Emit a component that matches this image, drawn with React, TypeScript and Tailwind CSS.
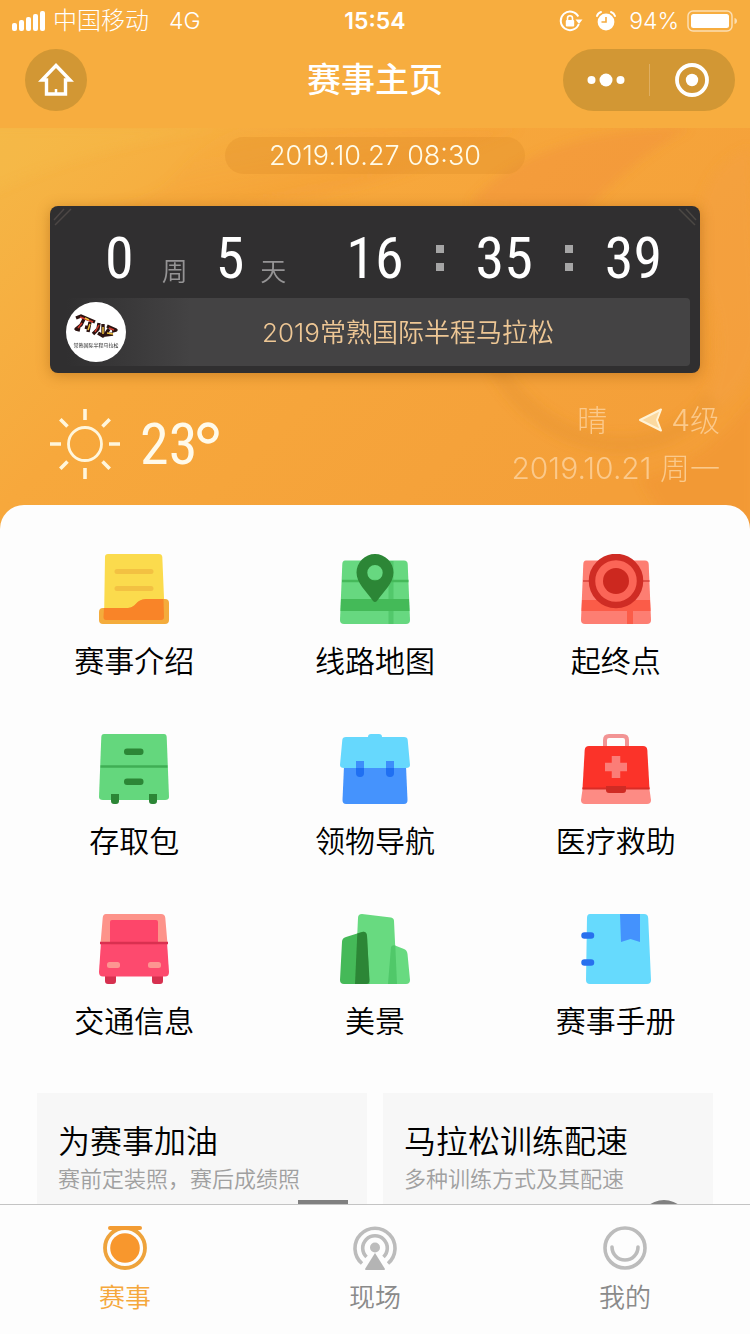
import type { ReactNode } from "react";

const digits = "font-['Roboto_Condensed','Roboto',sans-serif] text-[58px] leading-[60px] font-normal";

function HeroArt() {
  return (
    <svg className="absolute inset-0 h-full w-full" viewBox="0 0 750 400" preserveAspectRatio="none" aria-hidden="true">
      <defs>
        <linearGradient id="heroBase" x1="0" y1="0" x2="1" y2="0.55">
          <stop offset="0" stopColor="#f5b746" />
          <stop offset="0.4" stopColor="#f7a83c" />
          <stop offset="1" stopColor="#f49f39" />
        </linearGradient>
        <linearGradient id="heroFlame" x1="0" y1="0" x2="1" y2="1">
          <stop offset="0" stopColor="#f9a338" stopOpacity="0" />
          <stop offset="1" stopColor="#f0922f" stopOpacity="0.5" />
        </linearGradient>
        <filter id="soft">
          <feGaussianBlur stdDeviation="5" />
        </filter>
      </defs>
      <rect width="750" height="400" fill="url(#heroBase)" />
      <g filter="url(#soft)">
        <path d="M-20 70C60 30 130 15 220 0H-20Z" fill="#f7bd48" opacity="0.35" />
        <path d="M90 80C200 70 160 30 240 0H520C420 40 330 90 90 80Z" fill="url(#heroFlame)" />
        <path d="M470 75C520 20 600 0 690 0C640 25 610 60 580 85Z" fill="#f08c38" opacity="0.35" />
        <path d="M750 20C690 40 690 120 710 170C725 210 720 270 680 300C720 290 760 250 760 200Z" fill="#f4a040" opacity="0.6" />
        <path d="M495 235C535 315 650 350 712 270" fill="none" stroke="#e28f30" strokeWidth="18" opacity="0.3" />
        <path d="M640 350C690 335 725 310 755 265V400H670Z" fill="#ef9030" opacity="0.4" />
      </g>
    </svg>
  );
}

function StatusBar() {
  return (
    <div className="flex h-10 items-center px-3 pt-[2px] text-white">
      <div className="flex flex-1 items-center gap-2">
        <svg width="33" height="22" viewBox="0 0 33 22" fill="currentColor" aria-hidden="true">
          <rect x="0" y="13" width="5" height="8" rx="2" />
          <rect x="7" y="10" width="5" height="11" rx="2" />
          <rect x="14" y="7" width="5" height="14" rx="2" />
          <rect x="21" y="4" width="5" height="17" rx="2" />
          <rect x="28" y="1" width="5" height="20" rx="2" />
        </svg>
        <span className="text-2xl font-light">中国移动</span>
        <span className="ml-3 text-[23px] font-light">4G</span>
      </div>
      <time className="text-[23px] font-semibold">15:54</time>
      <div className="flex flex-1 items-center justify-end">
        <svg className="mr-3" width="24" height="22" viewBox="0 0 24 22" fill="none" stroke="currentColor" aria-hidden="true">
          <path d="M19.3 6.5A9.3 9.3 0 1 0 19.8 14" strokeWidth="2" />
          <path d="M16.5 9.5H23.5L20 14Z" fill="currentColor" stroke="none" />
          <rect x="6.8" y="10" width="8.4" height="6.4" rx="1" fill="currentColor" stroke="none" />
          <path d="M8.5 10V8.2A2.5 2.5 0 0 1 13.5 8.2V10" strokeWidth="1.6" />
        </svg>
        <svg className="mr-3" width="22" height="22" viewBox="0 0 22 22" fill="none" aria-hidden="true">
          <circle cx="11" cy="12" r="8.4" fill="white" />
          <path d="M2 6A6 6 0 0 1 6 2M20 6A6 6 0 0 0 16 2" stroke="white" strokeWidth="2" strokeLinecap="round" />
          <path d="M11 7V12H6.5" stroke="#f5ab3e" strokeWidth="1.6" />
        </svg>
        <span className="mr-2 text-[23px] font-light">94%</span>
        <svg width="51" height="22" viewBox="0 0 51 22" fill="none" aria-hidden="true">
          <rect x="1" y="1" width="44" height="20" rx="5" stroke="white" strokeOpacity="0.6" strokeWidth="1.5" />
          <rect x="4" y="4" width="38" height="14" rx="2.5" fill="white" />
          <path d="M47.5 8V14C49.5 13.5 50 12 50 11S49.5 8.500 47.500 8Z" fill="white" fillOpacity="0.6" />
        </svg>
      </div>
    </div>
  );
}

function NavBar() {
  return (
    <div className="grid h-20 grid-cols-[1fr_auto_1fr] items-center px-[15px]">
      <button aria-label="返回首页" className="ml-[10px] flex size-[62px] items-center justify-center rounded-full bg-[#d29734] text-white">
        <svg width="36" height="34" viewBox="0 0 36 34" fill="none" stroke="currentColor" strokeWidth="3.4" aria-hidden="true">
          <path d="M18 2.500L32 17H27.500V31H8.500V17H4Z" strokeLinejoin="miter" />
          <path d="M18 31V26" strokeWidth="2.500" />
        </svg>
      </button>
      <h1 className="text-[34px] leading-10 font-medium text-white">赛事主页</h1>
      <div className="flex h-[62px] w-[172px] items-center justify-self-end rounded-full bg-[#d29734] text-white">
        <button aria-label="更多" className="flex flex-1 justify-center">
          <svg width="38" height="14" viewBox="0 0 38 14" fill="currentColor" aria-hidden="true">
            <circle cx="4.500" cy="7" r="4" />
            <circle cx="19" cy="7" r="6.500" />
            <circle cx="33.500" cy="7" r="4" />
          </svg>
        </button>
        <span className="h-8 w-px bg-[#dfae60]" />
        <button aria-label="关闭" className="flex flex-1 justify-center">
          <svg width="34" height="34" viewBox="0 0 34 34" aria-hidden="true">
            <circle cx="17" cy="17" r="15" fill="none" stroke="currentColor" strokeWidth="3.800" />
            <circle cx="17" cy="17" r="6.200" fill="currentColor" />
          </svg>
        </button>
      </div>
    </div>
  );
}

function Colon() {
  return (
    <span className="flex flex-col gap-[10px]" aria-hidden="true">
      <i className="size-2 bg-[#a5a5a5]" />
      <i className="size-2 bg-[#a5a5a5]" />
    </span>
  );
}

function EventLogo() {
  return (
    <svg className="relative size-[60px] shrink-0 rounded-full bg-white" viewBox="0 0 60 60" aria-hidden="true">
      <g fill="none" stroke="#2b1210" strokeWidth="3.400" strokeLinejoin="round">
        <path d="M10 16L15 14L29 20" />
        <path d="M18 17L15 23L10 27L14 28" />
        <path d="M24 20L22 30M19 25L23 26" />
        <path d="M33 21L32 27L27 32" />
        <path d="M37 22V34L32 31" />
        <path d="M41 24L50 28L46 29M43 27L39 33L47 32" />
      </g>
      <g stroke="#d0382b" strokeWidth="1.500" fill="none">
        <path d="M14 15L27 20M16 21L12 26M33 23L29 30M43 26L48 28" />
      </g>
      <g stroke="#efc13c" strokeWidth="1.500" fill="none">
        <path d="M24 22L22 28M37 25V32M41 31L47 32M19 16L23 18" />
      </g>
      <text x="30" y="45" textAnchor="middle" fontSize="5" fill="#222222">常熟国际半程马拉松</text>
    </svg>
  );
}

function Countdown() {
  return (
    <section className="relative mx-[50px] mt-8 overflow-hidden rounded-lg bg-[#302f30] shadow-[0_2px_14px_rgba(150,85,10,0.45)]">
      <svg className="absolute top-0 left-0" width="26" height="26" viewBox="0 0 26 26" stroke="#4c4645" strokeWidth="1.500" aria-hidden="true">
        <path d="M4 14L14 3M5 19L21 3" />
      </svg>
      <svg className="absolute top-0 right-0" width="26" height="26" viewBox="0 0 26 26" stroke="#4c4844" strokeWidth="1.500" aria-hidden="true">
        <path d="M22 14L12 3M21 19L5 3" />
      </svg>
      <div className="flex h-[92px] items-center gap-8 pt-3 pl-[55px] text-white">
        <div className="mr-7 flex items-center gap-7">
          <span className={digits}>0</span>
          <span className="pt-7 text-[26px] leading-8 font-[350] text-[#959495]">周</span>
          <span className="flex items-center gap-4">
            <span className={digits}>5</span>
            <span className="pt-7 text-[26px] leading-8 font-[350] text-[#959495]">天</span>
          </span>
        </div>
        <span className={digits}>16</span>
        <Colon />
        <span className={digits}>35</span>
        <Colon />
        <span className={digits}>39</span>
      </div>
      <div className="mr-[10px] mb-[7px] ml-4 flex h-[68px] items-center rounded-sm bg-linear-to-r from-[#302f30] to-[#444344] to-20%">
        <EventLogo />
        <p className="flex-1 text-center text-[26px] font-[350] text-[#eec795]">2019常熟国际半程马拉松</p>
      </div>
    </section>
  );
}

function Weather() {
  return (
    <section className="flex items-center justify-between pt-[23px] pr-[30px] pb-[13px] pl-[50px]">
      <div className="flex items-center gap-5 text-[#fff6dc]">
        <svg width="70" height="70" viewBox="0 0 70 70" fill="none" stroke="currentColor" strokeWidth="3.600" aria-hidden="true">
          <circle cx="35" cy="35" r="16.500" strokeWidth="2.800" />
          <path d="M35 0V11M35 59V70M0 35H11M59 35H70M10.300 10.300L17.500 17.500M52.500 52.500L59.700 59.700M10.300 59.700L17.500 52.500M52.500 17.500L59.700 10.300" />
        </svg>
        <span className="flex text-[#fffaea]">
          <span className={digits}>23</span>
          <svg className="mt-2" width="22" height="22" viewBox="0 0 22 22" role="img" aria-label="度">
            <circle cx="11" cy="11" r="8.500" fill="none" stroke="currentColor" strokeWidth="4.500" />
          </svg>
        </span>
      </div>
      <div className="text-right text-[30px] leading-[48px] font-light text-[#fbc98b]">
        <p className="flex items-center justify-end">
          <span>晴</span>
          <svg className="mr-2 ml-8" width="24" height="24" viewBox="0 0 24 24" aria-hidden="true">
            <path d="M1 12L22 1.500L18 12L22 22.500Z" fill="#fbd9a0" stroke="#fff3d6" strokeWidth="2" strokeLinejoin="round" />
          </svg>
          <span>4级</span>
        </p>
        <p>2019.10.21 周一</p>
      </div>
    </section>
  );
}

const icons: Record<string, ReactNode> = {
  intro: (
    <>
      <path d="M9 0H60Q63 0 63.300 3L66 68H5L6 3Q6 0 9 0Z" fill="#fbdb4d" />
      <path d="M18 17.500H52M18 34.500H52" stroke="#f3c142" strokeWidth="5" strokeLinecap="round" />
      <path d="M4 54H29C37 54 37 45 47 45H66Q70 45 70 49V66Q70 70 66 70H4Q0 70 0 66V58Q0 54 4 54Z" fill="#f4ac3c" />
      <path d="M5 54H29C37 54 37 45 47 45H64.500L65 63Q65 66 62 66H7Q4.500 66 4.500 63Z" fill="#f98428" />
    </>
  ),
  map: (
    <>
      <path d="M5 6.500H64Q67.500 6.500 67.700 10L70 66Q70 70 66 70H4Q0 70 0 66L2.300 10Q2.500 6.500 5 6.500Z" fill="#67d880" />
      <path d="M51 7V70" stroke="#52c86b" strokeWidth="5" />
      <path d="M2 27H68.500" stroke="#45b95a" strokeWidth="2.500" />
      <path d="M1 45H69L69.500 57H0.500Z" fill="#44ba58" />
      <path fillRule="evenodd" d="M35 0A18.500 18.500 0 0 1 53.500 18.500C53.500 29 44 37 37 47Q35 49 33 47C26 37 16.500 29 16.500 18.500A18.500 18.500 0 0 1 35 0ZM35 11A7.700 7.700 0 1 0 35 26.400A7.700 7.700 0 1 0 35 11Z" fill="#2c8636" />
    </>
  ),
  finish: (
    <>
      <path d="M5 6.500H64Q67.500 6.500 67.700 10L70 66Q70 70 66 70H4Q0 70 0 66L2.300 10Q2.500 6.500 5 6.500Z" fill="#fd7e72" />
      <path d="M2 27H68.500" stroke="#e05048" strokeWidth="2" />
      <path d="M1 46H69L69.500 57H0.500Z" fill="#fb5c48" />
      <path d="M49 46V70" stroke="#fb5c48" strokeWidth="6" />
      <circle cx="35" cy="27" r="24" fill="#fb6557" stroke="#cf2c24" strokeWidth="6.500" />
      <circle cx="35" cy="27" r="13" fill="#cc281f" />
    </>
  ),
  cabinet: (
    <>
      <path d="M12 60H20V67Q20 70 17 70H15Q12 70 12 67ZM50 60H58V67Q58 70 55 70H53Q50 70 50 67Z" fill="#2c8636" />
      <path d="M5 0H65Q67.500 0 67.700 3L70 63Q70 66 66 66H4Q0 66 0 63L2.300 3Q2.500 0 5 0Z" fill="#64d77d" />
      <path d="M1.500 32.500H68.500" stroke="#3fae54" strokeWidth="2.500" />
      <rect x="25" y="14.500" width="19.500" height="6.500" rx="3" fill="#2c8636" />
      <rect x="25" y="44.500" width="19.500" height="6.500" rx="3" fill="#2c8636" />
      <path d="M12 60H20V66H12ZM50 60H58V66H50Z" fill="#2c8636" />
    </>
  ),
  bag: (
    <>
      <path d="M4 32H66L67.500 66Q67.500 70 64 70H6Q2.500 70 2.500 66Z" fill="#4593fd" />
      <path d="M28 3Q28 0 31 0H39Q42 0 42 3H64Q67.500 3 67.700 6L70 31Q70 34 66 34H4Q0 34 0 31L2.300 6Q2.500 3 6 3Z" fill="#66d8fd" />
      <path d="M16 27H24V39Q24 43 20 43T16 39ZM46 27H54V39Q54 43 50 43T46 39Z" fill="#3d8dfb" />
      <path d="M16 34H24V39Q24 43 20 43T16 39ZM46 34H54V39Q54 43 50 43T46 39Z" fill="#1f6ff2" />
    </>
  ),
  medical: (
    <>
      <path d="M24 13V6Q24 2 28 2H42Q46 2 46 6V13" fill="none" stroke="#f29494" strokeWidth="4" />
      <path d="M2 52H68L70 66Q70 70 66 70H4Q0 70 0 66Z" fill="#fd8b84" />
      <path d="M8 12H62Q66 12 66.300 16L68.500 55H1.500L3.700 16Q4 12 8 12Z" fill="#fb3329" />
      <path d="M1.500 54.500H68.500" stroke="#d92c26" strokeWidth="2" />
      <path d="M25 52H45V56Q45 59 42 59H28Q25 59 25 56Z" fill="#cf2b24" />
      <path d="M35 22V44M24 33H46" stroke="#fb7d77" strokeWidth="8.500" />
    </>
  ),
  bus: (
    <>
      <path d="M6 60H17V67Q17 70 14 70H9Q6 70 6 67ZM53 60H64V67Q64 70 61 70H56Q53 70 53 67Z" fill="#d6304f" />
      <path d="M7 0H62Q66 0 66.300 4L68.500 30H1.500L3.700 4Q4 0 7 0Z" fill="#fd938a" />
      <path d="M2 28H68L70 58Q70 62.500 66 62.500H4Q0 62.500 0 58Z" fill="#fd4a6e" />
      <rect x="11" y="6" width="48" height="25" rx="2" fill="#fd466a" />
      <path d="M1 29H69" stroke="#d93050" strokeWidth="2.500" />
      <rect x="8" y="48" width="13" height="6" rx="2.500" fill="#fd9591" />
      <rect x="49" y="48" width="13" height="6" rx="2.500" fill="#fd9591" />
    </>
  ),
  scenery: (
    <>
      <path d="M18 4Q18 0 22 0L51 3.500Q54 4 54 7L57 70H15Z" fill="#68da80" />
      <path d="M2 28Q2 24 6 23L22 18Q26.500 17 27 22L29.500 70H4Q0 70 0 66Z" fill="#45b958" />
      <path d="M17.300 19.500L22 18Q26.500 17 27 22L29.500 66Q29.500 70 26 70H15Z" fill="#2c8636" />
      <path d="M51 33Q52 30.500 55 31.500L64 35Q67 36 67.500 40L70 66Q70 70 66 70H48Z" fill="#68da80" />
      <path d="M51 33Q52 30.500 55.300 31.500L57 70H48Z" fill="#50c869" />
    </>
  ),
  manual: (
    <>
      <path d="M9 0H63Q67 0 67.200 4L70 66Q70 70 66 70H9Q5 70 5 66L6 4Q6 0 9 0Z" fill="#66dafd" />
      <path d="M39 0H59V28L49.500 25L40 28Z" fill="#4492fd" />
      <path d="M3.500 21.500H10M3.500 48.500H10" stroke="#2870ee" strokeWidth="6.500" strokeLinecap="round" />
    </>
  ),
};

const entries = [
  { icon: "intro", label: "赛事介绍" },
  { icon: "map", label: "线路地图" },
  { icon: "finish", label: "起终点" },
  { icon: "cabinet", label: "存取包" },
  { icon: "bag", label: "领物导航" },
  { icon: "medical", label: "医疗救助" },
  { icon: "bus", label: "交通信息" },
  { icon: "scenery", label: "美景" },
  { icon: "manual", label: "赛事手册" },
];

const tabs = [
  {
    label: "赛事",
    active: true,
    icon: (
      <>
        <circle cx="22" cy="22" r="20" fill="none" stroke="#eea33c" strokeWidth="3.800" />
        <path d="M7 2H37" stroke="#f39c33" strokeWidth="4" strokeLinecap="round" />
        <circle cx="22" cy="22" r="14.800" fill="#f8972d" />
      </>
    ),
  },
  {
    label: "现场",
    active: false,
    icon: (
      <>
        <path d="M9 37.500A20 20 0 1 1 35 37.500" fill="none" stroke="#bcbcbc" strokeWidth="3.600" />
        <path d="M13.500 31A12.300 12.300 0 1 1 30.500 31" fill="none" stroke="#bcbcbc" strokeWidth="3.600" />
        <circle cx="22" cy="21.500" r="5" fill="#bcbcbc" />
        <path d="M22 27L32 43Q32 44 31 44H13Q12 44 12 43Z" fill="#b4b4b4" />
      </>
    ),
  },
  {
    label: "我的",
    active: false,
    icon: (
      <g fill="none" stroke="#bcbcbc" strokeWidth="3.600">
        <circle cx="22" cy="22" r="20" />
        <path d="M9 21A13 13 0 0 0 35 21" strokeLinecap="round" />
      </g>
    ),
  },
];

export default function App() {
  return (
    <div className="flex h-screen flex-col bg-[#fdfdfd] font-['Inter','Noto_Sans_CJK_SC',sans-serif]">
      <main className="min-h-0 flex-1 overflow-y-auto [scrollbar-width:none]">
        <div className="bg-[#f7ad3f]">
          <header className="pb-2">
            <StatusBar />
            <NavBar />
          </header>
          <div className="relative">
            <HeroArt />
            <div className="relative pt-[9px]">
              <div className="flex justify-center">
                <time className="rounded-full bg-[#d98a28]/30 px-11 text-[27px] leading-[37px] font-light text-[#fffbe8]">
                  2019.10.27 08:30
                </time>
              </div>
              <Countdown />
              <Weather />
              <div className="h-6 rounded-t-3xl bg-[#fdfdfd]" />
            </div>
          </div>
        </div>

        <nav className="grid grid-cols-3 gap-y-12 px-[14px] pt-[25px]">
          {entries.map((entry) => (
            <a key={entry.label} href={`#${entry.icon}`} className="flex flex-col items-center gap-3 text-black">
              <svg className="size-[70px]" viewBox="0 0 70 70" aria-hidden="true">
                {icons[entry.icon]}
              </svg>
              <span className="text-[30px] leading-[50px] font-[350]">{entry.label}</span>
            </a>
          ))}
        </nav>

        <section className="grid grid-cols-2 gap-4 px-[37px] pt-[47px] pb-8">
          <a href="#cheer" className="flex flex-col bg-[#f7f7f7] pt-7 pb-5 pl-[21px]">
            <strong className="text-[32px] leading-[42px] font-[350] text-black">为赛事加油</strong>
            <span className="text-[22px] leading-8 font-[350] text-[#a0a0a0]">赛前定装照，赛后成绩照</span>
            <svg className="mt-[5px] mr-[19px] self-end" width="50" height="50" viewBox="0 0 50 50" aria-hidden="true">
              <rect width="50" height="50" fill="#808080" />
            </svg>
          </a>
          <a href="#pace" className="flex flex-col bg-[#f7f7f7] pt-7 pb-5 pl-[21px]">
            <strong className="text-[32px] leading-[42px] font-[350] text-black">马拉松训练配速</strong>
            <span className="text-[22px] leading-8 font-[350] text-[#a0a0a0]">多种训练方式及其配速</span>
            <svg className="mt-[5px] mr-6 self-end" width="50" height="50" viewBox="0 0 50 50" aria-hidden="true">
              <circle cx="25" cy="25" r="25" fill="#808080" />
            </svg>
          </a>
        </section>
      </main>

      <nav className="grid shrink-0 grid-cols-3 border-t border-[#c4c4c4] bg-[#fdfdfd] pt-[21px] pb-4">
        {tabs.map((tab) => (
          <button key={tab.label} className="flex flex-col items-center gap-2">
            <svg width="44" height="44" viewBox="0 0 44 44" aria-hidden="true">
              {tab.icon}
            </svg>
            <span className={tab.active ? "text-[26px] leading-10 font-[350] text-[#f5a83c]" : "text-[26px] leading-10 font-[350] text-[#8a8a8a]"}>
              {tab.label}
            </span>
          </button>
        ))}
      </nav>
    </div>
  );
}
